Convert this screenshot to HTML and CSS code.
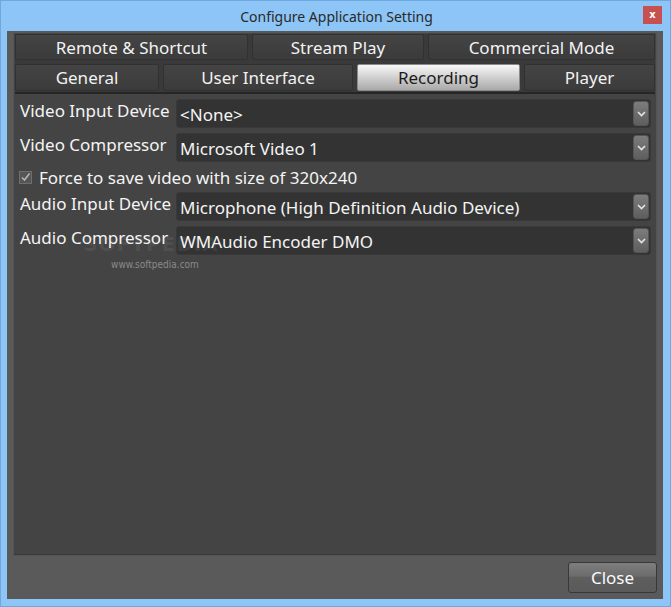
FILE: index.html
```html
<!DOCTYPE html>
<html lang="en">
<head>
    <meta charset="UTF-8">
    <title>Configure Application Setting</title>
    <link rel="stylesheet" href="styles.css">
</head>
<body>
    <div class="window">
        <div class="titlebar">
            <span class="title">Configure Application Setting</span>
            <button class="win-close">x</button>
        </div>

        <div class="client">
            <div class="panel">
                <div class="tabs">
                    <div class="tab-row row-top">
                        <div class="tab t-remote">Remote &amp; Shortcut</div>
                        <div class="tab t-stream">Stream Play</div>
                        <div class="tab t-commercial">Commercial Mode</div>
                    </div>
                    <div class="tab-row row-bottom">
                        <div class="tab t-general">General</div>
                        <div class="tab t-ui">User Interface</div>
                        <div class="tab t-recording active">Recording</div>
                        <div class="tab t-player">Player</div>
                    </div>
                </div>

                <div class="form">
                    <label class="field-label">Video Input Device</label>
                    <div class="select">
                        <span class="select-text">&lt;None&gt;</span>
                        <span class="drop">
                            <svg width="9" height="6" viewBox="0 0 9 6"><path d="M1 1l3.5 3.5L8 1" fill="none" stroke="#e4e4e4" stroke-width="1.6"/></svg>
                        </span>
                    </div>

                    <label class="field-label">Video Compressor</label>
                    <div class="select">
                        <span class="select-text">Microsoft Video 1</span>
                        <span class="drop">
                            <svg width="9" height="6" viewBox="0 0 9 6"><path d="M1 1l3.5 3.5L8 1" fill="none" stroke="#e4e4e4" stroke-width="1.6"/></svg>
                        </span>
                    </div>

                    <div class="check-row">
                        <span class="checkbox">
                            <svg width="11" height="11" viewBox="0 0 11 11"><path d="M2 5.5l2.5 2.5L9.5 1.5" fill="none" stroke="#b4b4b4" stroke-width="1.6"/></svg>
                        </span>
                        <span>Force to save video with size of 320x240</span>
                    </div>

                    <label class="field-label">Audio Input Device</label>
                    <div class="select">
                        <span class="select-text">Microphone (High Definition Audio Device)</span>
                        <span class="drop">
                            <svg width="9" height="6" viewBox="0 0 9 6"><path d="M1 1l3.5 3.5L8 1" fill="none" stroke="#e4e4e4" stroke-width="1.6"/></svg>
                        </span>
                    </div>

                    <label class="field-label">Audio Compressor</label>
                    <div class="select">
                        <span class="select-text">WMAudio Encoder DMO</span>
                        <span class="drop">
                            <svg width="9" height="6" viewBox="0 0 9 6"><path d="M1 1l3.5 3.5L8 1" fill="none" stroke="#e4e4e4" stroke-width="1.6"/></svg>
                        </span>
                    </div>
                </div>

                <div class="watermark">
                    <span class="wm-big">SOFTPEDIA<sup>™</sup></span>
                    <span class="wm-url">www.softpedia.com</span>
                </div>
            </div>

            <div class="footer">
                <button class="close-btn">Close</button>
            </div>
        </div>
    </div>
</body>
</html>
```

FILE: styles.css
```css
* {
    margin: 0;
    padding: 0;
    box-sizing: border-box;
}

body {
    font-family: "Noto Sans", "Open Sans", sans-serif;
    background: #8cc5f6;
    width: 671px;
    height: 607px;
    overflow: hidden;
}

.window {
    width: 671px;
    height: 607px;
    border: 1px solid #6ea8de;
    background: #8cc5f6;
    display: flex;
    flex-direction: column;
}

/* title bar */
.titlebar {
    height: 30px;
    position: relative;
    display: flex;
    align-items: center;
    justify-content: center;
}

.title {
    font-size: 14px;
    color: #2a2a2a;
    margin-left: 2px;
}

.win-close {
    position: absolute;
    right: 8px;
    top: 5px;
    width: 19px;
    height: 18px;
    border: none;
    background: #c75050;
    color: #fff;
    font-family: "DejaVu Sans", sans-serif;
    font-size: 10px;
    font-weight: bold;
    line-height: 16px;
}

/* client area */
.client {
    flex: 1;
    margin: 0 7px 7px 6px;
    background: #5a5a5a;
    padding: 2px 7px 0 7px;
    display: flex;
    flex-direction: column;
}

.panel {
    height: 521px;
    background: #444;
    padding: 1px;
    position: relative;
    box-shadow: 0 1px 1px rgba(0, 0, 0, 0.35);
}

/* tabs */
.tabs {
    display: flex;
    flex-direction: column;
    gap: 4px;
    background: #3a3a3a;
    padding: 0 0 1px;
    border-bottom: 2px solid #262626;
}

.tab-row {
    display: flex;
    gap: 4px;
}

.row-top { height: 26px; }
.row-bottom { height: 27px; }

.tab {
    display: flex;
    align-items: center;
    justify-content: center;
    background: linear-gradient(#444, #3b3b3b);
    border: 1px solid #313131;
    border-radius: 2px;
    color: #f2f2f2;
    font-size: 17px;
}

.t-remote { width: 233px; }
.t-stream { width: 172px; }
.t-commercial { width: 227px; }
.t-general { width: 144px; }
.t-ui { width: 190px; }
.t-recording { width: 163px; }
.t-player { width: 131px; }

.tab.active {
    background: linear-gradient(#f8f8f8, #c8c8c8 60%, #a9a9a9);
    border-color: #8a8a8a;
    color: #1c1c1c;
}

/* form */
.form {
    display: grid;
    grid-template-columns: 156px 475px;
    row-gap: 5px;
    padding: 5px 0 0 5px;
    color: #f4f4f4;
    font-size: 17px;
}

.field-label {
    align-self: center;
    padding-bottom: 6px;
    white-space: nowrap;
}

.select {
    height: 29px;
    background: #333;
    border: 1px solid #393939;
    border-radius: 3px;
    display: flex;
    align-items: center;
    justify-content: space-between;
    padding: 0 1px 0 3px;
}

.select-text {
    padding-top: 1px;
}

.drop {
    width: 16px;
    height: 25px;
    border-radius: 3px;
    background: linear-gradient(#7c7c7c, #5e5e5e);
    border: 1px solid #555;
    display: flex;
    align-items: center;
    justify-content: center;
}

.check-row {
    grid-column: 1 / -1;
    height: 20px;
    display: flex;
    align-items: center;
    gap: 7px;
    margin-left: -1px;
}

.checkbox {
    width: 13px;
    height: 13px;
    border: 1px solid #6e6e6e;
    background: #555;
    display: flex;
    align-items: center;
    justify-content: center;
}

/* watermark */
.watermark {
    position: absolute;
    left: 71px;
    top: 196px;
    width: 140px;
    display: flex;
    flex-direction: column;
    align-items: center;
    pointer-events: none;
}

.wm-big {
    font-family: "DejaVu Sans", sans-serif;
    font-size: 20px;
    line-height: 24px;
    font-weight: bold;
    letter-spacing: 1px;
    color: rgba(255, 255, 255, 0.07);
}

.wm-big sup {
    font-size: 7px;
}

.wm-url {
    font-family: "DejaVu Sans Condensed", "DejaVu Sans", sans-serif;
    font-size: 10px;
    line-height: 12px;
    color: #8a8a8a;
    margin-top: 3px;
}

/* footer */
.footer {
    flex: 1;
    display: flex;
    justify-content: flex-end;
    align-items: flex-start;
    padding-top: 8px;
    margin-right: -1px;
}

.close-btn {
    width: 89px;
    height: 31px;
    border: 1px solid #383838;
    border-radius: 3px;
    background: linear-gradient(#7e7e7e, #6c6c6c 45%, #5e5e5e 50%, #5a5a5a);
    color: #fafafa;
    font-family: "Noto Sans", sans-serif;
    font-size: 17px;
}
```
